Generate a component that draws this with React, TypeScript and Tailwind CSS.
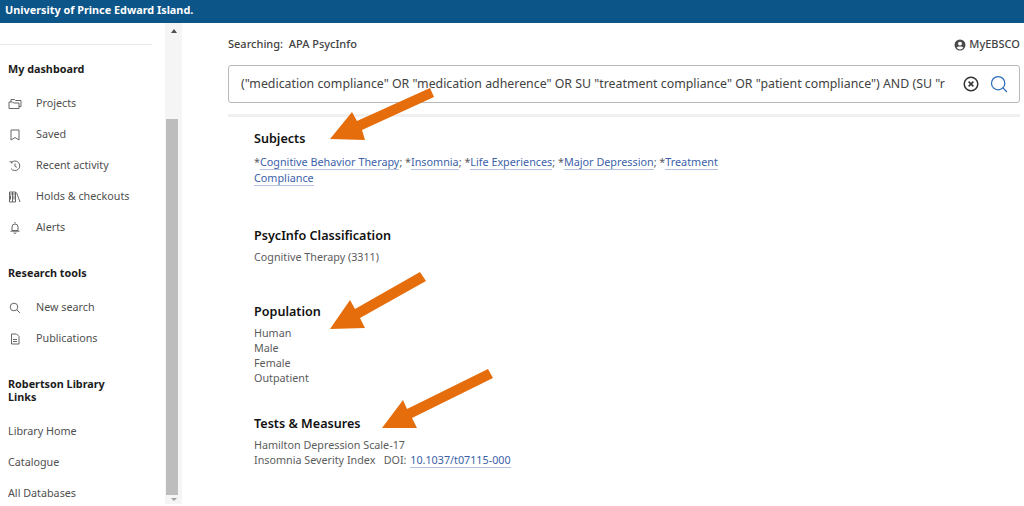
import { Search } from "lucide-react"

const font = "font-['Noto_Sans',sans-serif]"

function NavItem({ icon, label }: { icon?: React.ReactNode; label: string }) {
    return (
        <div className="flex h-[31px] items-center text-[10.75px] text-[#4f4f4f]">
            {icon && <span className="flex w-[28px] text-[#666666]">{icon}</span>}
            <span>{label}</span>
        </div>
    )
}

function Link({ children }: { children: React.ReactNode }) {
    return <span className="border-b border-[#b4c3e0] text-[#3d5fa8]">{children}</span>
}

function Arrow({ points }: { points: string }) {
    return (
        <svg className="absolute left-0 top-0" width="1024" height="506">
            <polygon points={points} fill="#e56d0b" />
        </svg>
    )
}

function Icon({ children }: { children: React.ReactNode }) {
    return (
        <svg width="14" height="14" viewBox="0 0 14 14" fill="none" stroke="currentColor" strokeWidth="1">
            {children}
        </svg>
    )
}

export default function App() {
    return (
        <div className={`relative h-[506px] w-[1024px] overflow-hidden bg-white ${font}`}>
            <div className="flex h-[23px] items-center bg-[#0b5588] pl-[5px] pb-[3px] text-[10.85px] font-bold text-white">
                University of Prince Edward Island.
            </div>
            <div className="flex h-[483px]">
                {/* sidebar */}
                <aside className="w-[165px] pl-[8px]">
                    <div className="-ml-[8px] mt-[21px] w-[152px] border-t border-[#e8e8e8]" />
                    <h3 className="mt-[15px] text-[10.8px] leading-[18px] font-bold text-[#1c1c1c]">My dashboard</h3>
                    <div className="mt-[10px]">
                        <NavItem
                            label="Projects"
                            icon={
                                <Icon>
                                    <path d="M3 5V2.500h3.500l1 1H13V9.500h-2" />
                                    <path d="M1 5h3.500l1 1H11v5.500H1Z" />
                                </Icon>
                            }
                        />
                        <NavItem
                            label="Saved"
                            icon={
                                <Icon>
                                    <path d="M3 2h8v10L7 9.500 3 12Z" />
                                </Icon>
                            }
                        />
                        <NavItem
                            label="Recent activity"
                            icon={
                                <Icon>
                                    <path d="M3.200 3.800A4.800 4.800 0 1 1 3 9.500" />
                                    <path d="M1.500 2.800h2.400v1.800M7 4.500V7.300l1.800 1" />
                                </Icon>
                            }
                        />
                        <NavItem
                            label="Holds & checkouts"
                            icon={
                                <Icon>
                                    <path d="M1.500 2h3v10h-3ZM4.500 2h3v10h-3ZM1.500 4h3M4.500 4h3M8.500 2.500l3.500 9.500" />
                                    <path d="M2.500 5.500v4M6 5.500v4" />
                                </Icon>
                            }
                        />
                        <NavItem
                            label="Alerts"
                            icon={
                                <Icon>
                                    <path d="M7 1v1.300M4 9.500V6a3 3 0 0 1 6 0v3.500ZM2.500 10.200h9M6 11.500a1 1 0 0 0 2 0" />
                                </Icon>
                            }
                        />
                    </div>
                    <h3 className="mt-[21px] text-[10.8px] leading-[18px] font-bold text-[#1c1c1c]">Research tools</h3>
                    <div className="mt-[10px]">
                        <NavItem
                            label="New search"
                            icon={
                                <Icon>
                                    <circle cx="6" cy="6" r="3.800" />
                                    <path d="M9 9l3 3" />
                                </Icon>
                            }
                        />
                        <NavItem
                            label="Publications"
                            icon={
                                <Icon>
                                    <path d="M3.500 2h5l2.500 2.500V12h-7.500Z" />
                                    <path d="M5 7.500h4M5 9.500h4" />
                                </Icon>
                            }
                        />
                    </div>
                    <h3 className="mt-[23px] w-[120px] text-[10.8px] leading-[13px] font-bold text-[#1c1c1c]">
                        Robertson Library Links
                    </h3>
                    <div className="mt-[13px]">
                        <NavItem label="Library Home" />
                        <NavItem label="Catalogue" />
                        <NavItem label="All Databases" />
                    </div>
                </aside>

                {/* scrollbar */}
                <div className="flex h-[481px] w-[17px] flex-col items-center bg-[#f5f5f5]">
                    <div className="mt-[6px] h-0 w-0 border-x-[3.5px] border-b-[4px] border-x-transparent border-b-[#505050]" />
                    <div className="mt-[86px] h-[376px] w-[12px] -translate-x-[2px] bg-[#bdbdbd]" />
                    <div className="mt-[3px] h-0 w-0 border-x-[3px] border-t-[3px] border-x-transparent border-t-[#a0a0a0]" />
                </div>

                {/* main */}
                <main className="flex-1 pl-[46px] pr-[4px]">
                    <div className="flex h-[42px] items-center justify-between pt-[1px] text-[11px] text-[#424242]">
                        <span className="font-medium">Searching:&nbsp; APA PsycInfo</span>
                        <span className="flex items-center gap-[3px] font-medium">
                            <svg width="12" height="12" viewBox="0 0 24 24" fill="#4a4a4a">
                                <path d="M12 1a11 11 0 1 0 0 22 11 11 0 0 0 0-22Zm0 4.400a3.900 3.900 0 1 1 0 7.800 3.900 3.900 0 0 1 0-7.800Zm0 15.400a8.900 8.900 0 0 1-6.800-3.200c1-1.900 4.300-2.800 6.800-2.800s5.800.9 6.800 2.800a8.900 8.900 0 0 1-6.800 3.200Z" />
                            </svg>
                            MyEBSCO
                        </span>
                    </div>
                    <div className="flex h-[38px] items-center overflow-hidden rounded-[3px] border border-[#b9b9b9] pl-[12px] pr-[10px]">
                        <span className="w-[704px] overflow-hidden whitespace-nowrap text-[12.35px] text-[#424242]">
                            ("medication compliance" OR "medication adherence" OR SU "treatment compliance" OR "patient compliance") AND (SU "r
                        </span>
                        <svg className="ml-auto" width="16" height="16" viewBox="0 0 16 16" fill="none" stroke="#333" strokeWidth="1.5">
                            <circle cx="8" cy="8" r="6.800" />
                            <path d="M5.600 5.600l4.800 4.800M10.400 5.600l-4.800 4.800" />
                        </svg>
                        <Search className="ml-[10px]" size={20} strokeWidth={1.5} color="#2a6cb8" />
                    </div>
                    <div className="mt-[11px] h-[3px] bg-[#f0f0f0]" />

                    <div className="pl-[26px] text-[10.75px] leading-[15px] text-[#5c5c5c]">
                        <h2 className="mt-[13px] text-[12.6px] leading-[18px] font-semibold text-[#111]">Subjects</h2>
                        <p className="mt-[6px] w-[480px] text-[10.8px] leading-[16px]">
                            *<Link>Cognitive Behavior Therapy</Link>; *<Link>Insomnia</Link>; *<Link>Life Experiences</Link>; *<Link>Major Depression</Link>; *<Link>Treatment</Link> <Link>Compliance</Link>
                        </p>
                        <h2 className="mt-[41px] text-[12.6px] leading-[18px] font-semibold text-[#111]">PsycInfo Classification</h2>
                        <p className="mt-[5px]">Cognitive Therapy (3311)</p>
                        <h2 className="mt-[38px] text-[12.6px] leading-[18px] font-semibold text-[#111]">Population</h2>
                        <div className="mt-[5px]">
                            <p>Human</p>
                            <p>Male</p>
                            <p>Female</p>
                            <p>Outpatient</p>
                        </div>
                        <h2 className="mt-[29px] text-[12.6px] leading-[18px] font-semibold text-[#111]">Tests &amp; Measures</h2>
                        <p className="mt-[5px]">Hamilton Depression Scale-17</p>
                        <p>
                            Insomnia Severity Index&nbsp;&nbsp; DOI: <span className="ml-[1px]"><Link>10.1037/t07115-000</Link></span>
                        </p>
                    </div>
                </main>
            </div>

            <Arrow points="330,139 352,112 357,121 430,88 434,97 362,130 365,140" />
            <Arrow points="330,329 350,300 355,309 420,272 426,281 360,318 365,328" />
            <Arrow points="382,428 403,400 407,409 488,369 493,378 412,418 417,428" />
        </div>
    )
}
